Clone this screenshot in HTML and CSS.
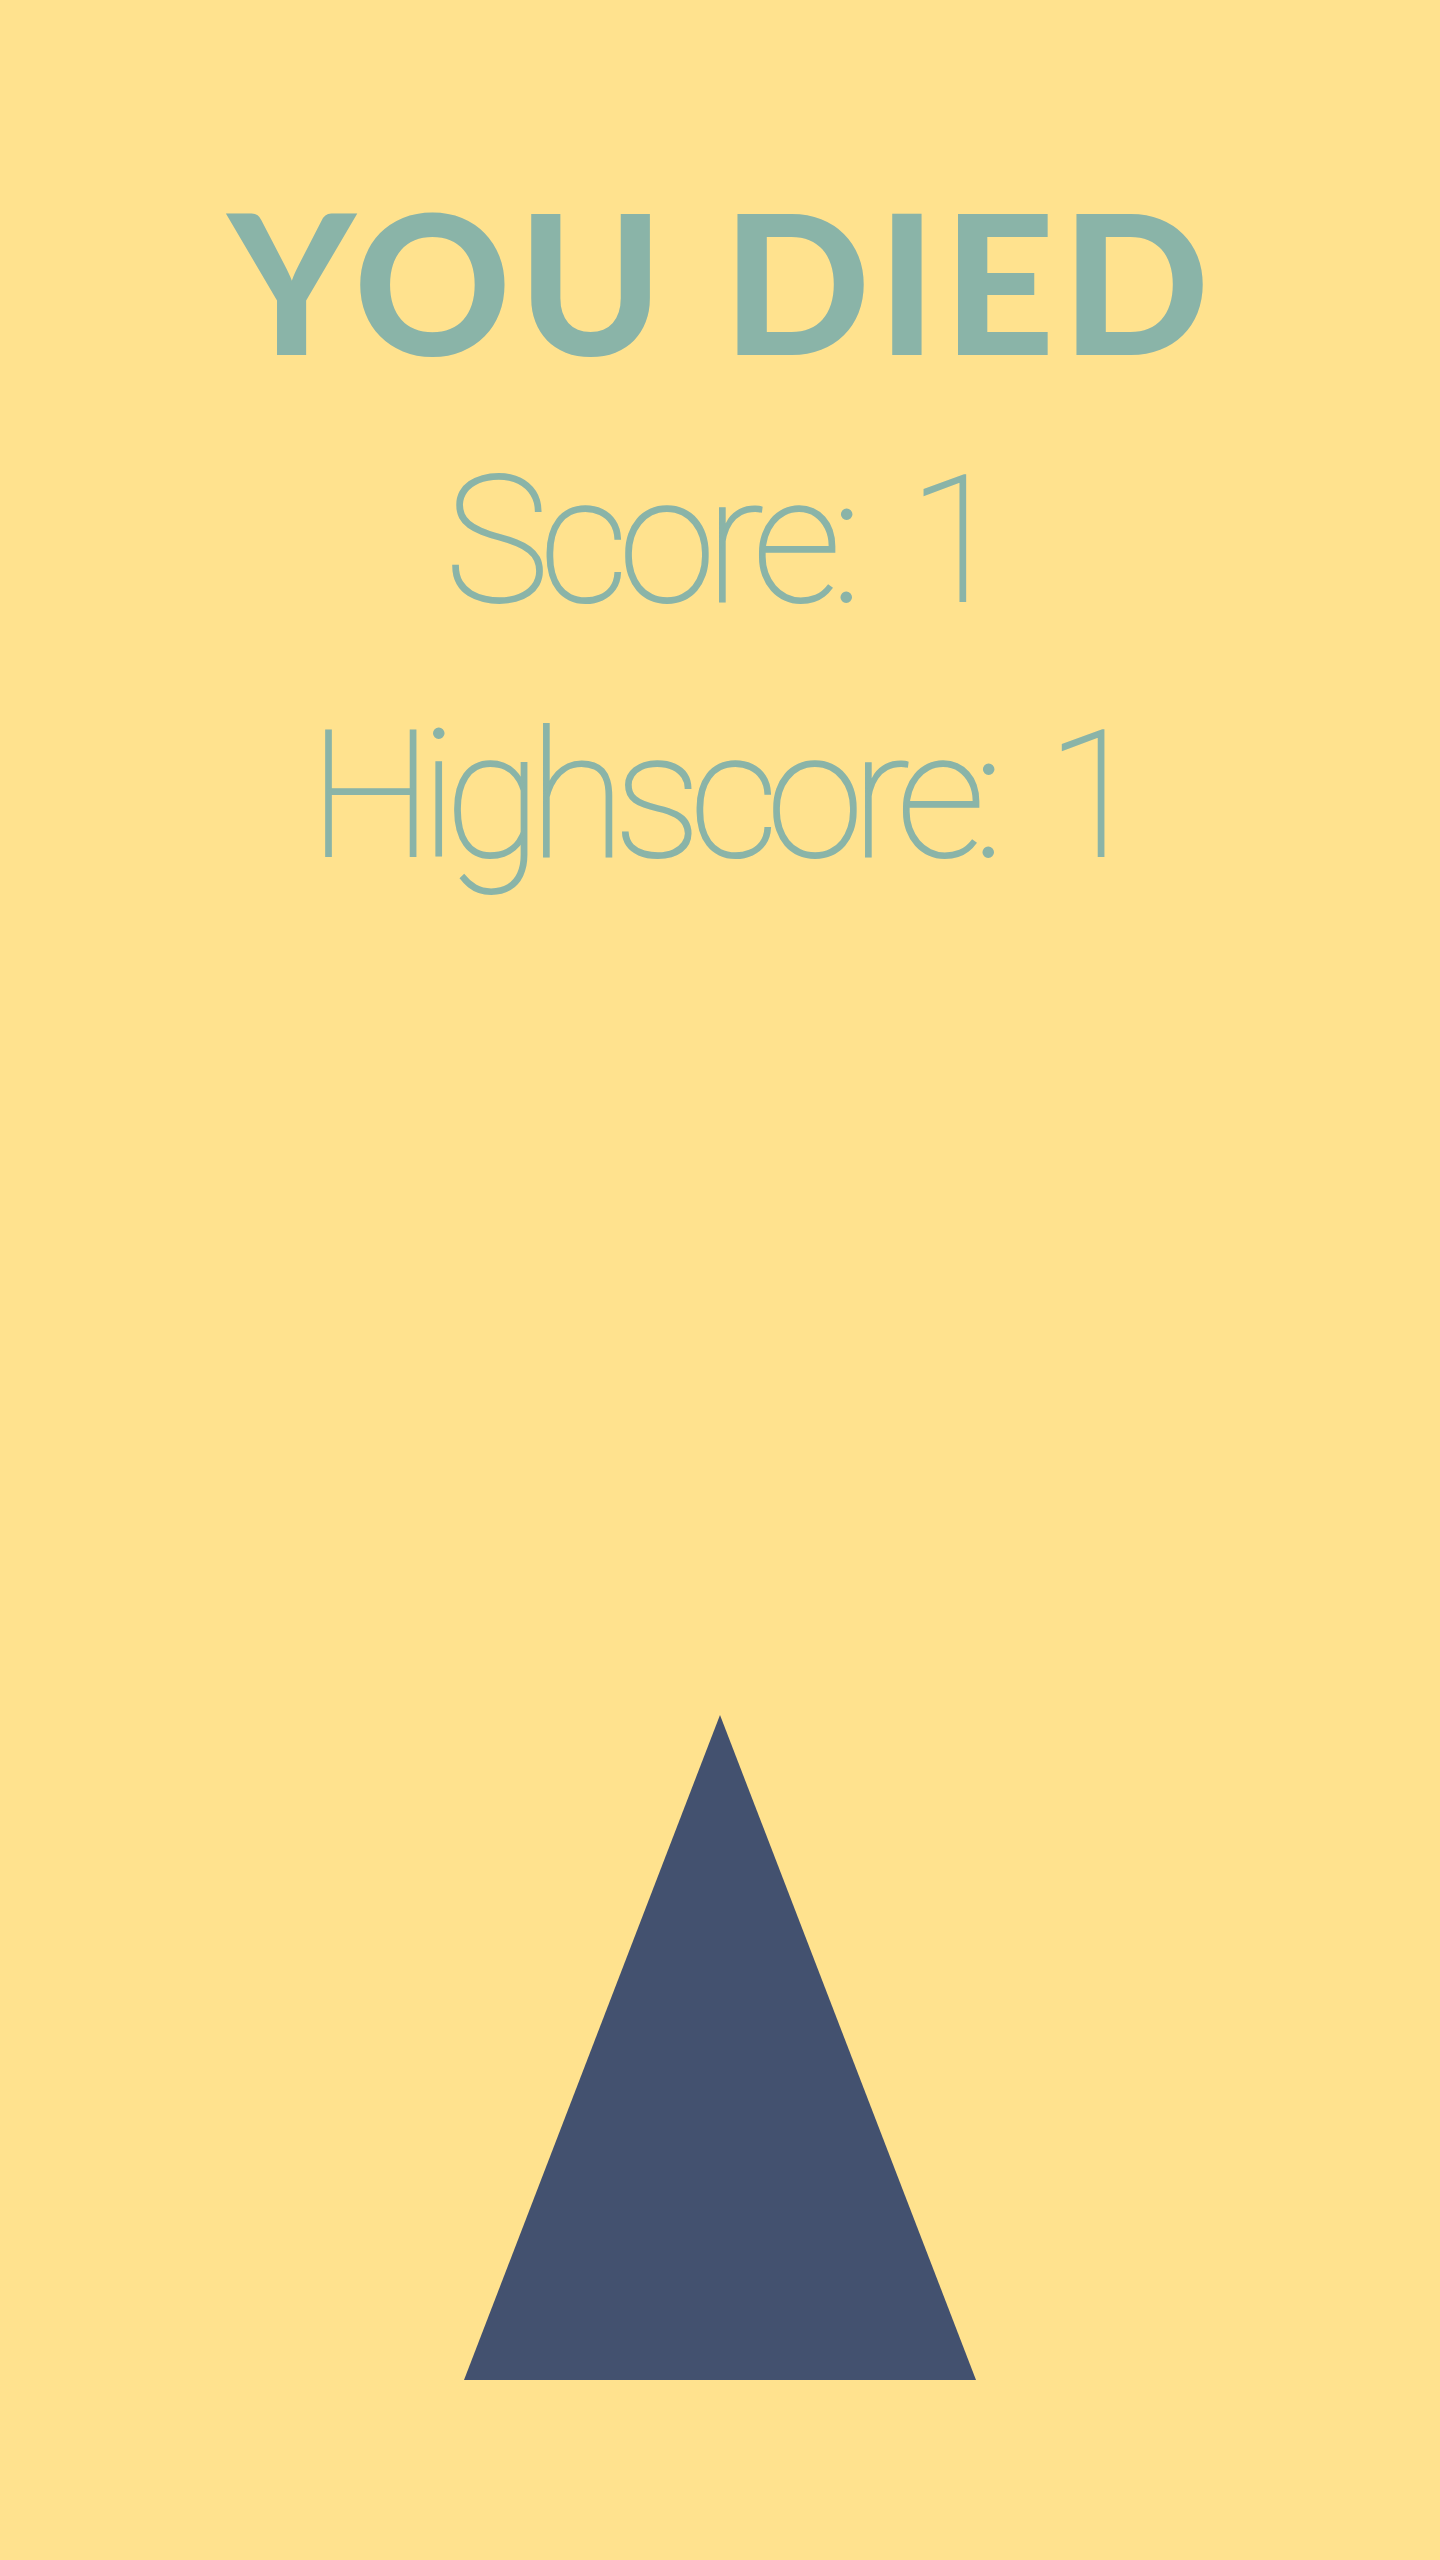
FILE: index.html
```html
<!DOCTYPE html>
<html lang="en">
<head>
<meta charset="utf-8">
<title>You Died</title>
<link rel="stylesheet" href="styles.css">
</head>
<body>
<main class="screen">
  <h1 class="title">YOU DIED</h1>
  <p class="stat stat-score">Score: 1</p>
  <p class="stat stat-high">Highscore: 1</p>
  <div class="player" aria-hidden="true"></div>
</main>
</body>
</html>
```

FILE: styles.css
```css
html, body {
  margin: 0;
  padding: 0;
  background: #ffe28e;
}
.screen {
  width: 1440px;
  height: 2560px;
  display: flex;
  flex-direction: column;
  align-items: center;
  padding-top: 183px;
  box-sizing: border-box;
  color: #8ab4a8;
}
.title {
  margin: 0;
  font-family: Lato, "Liberation Sans", sans-serif;
  font-size: 194px;
  line-height: 1;
  font-weight: 900;
  letter-spacing: 7px;
  text-indent: 4px;
  white-space: nowrap;
}
.stat {
  margin: 0;
  font-family: Roboto, "Liberation Sans", sans-serif;
  font-size: 176px;
  line-height: 1;
  font-weight: 100;
  letter-spacing: -10px;
  word-spacing: 24px;
  -webkit-text-stroke: 2px #8ab4a8;
  white-space: nowrap;
}
.stat-score {
  margin-top: 76px;
}
.stat-high {
  margin-top: 79px;
  letter-spacing: -12px;
}
.player {
  margin-top: 831px;
  width: 512px;
  height: 665px;
  background: #43516f;
  clip-path: polygon(50% 0, 100% 100%, 0 100%);
}
```
